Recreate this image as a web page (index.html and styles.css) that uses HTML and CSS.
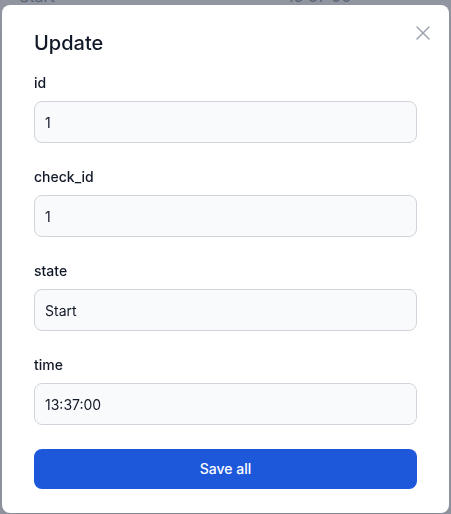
FILE: index.html
```html
<!DOCTYPE html>
<html lang="en">
<head>
<meta charset="utf-8">
<title>Update</title>
<link rel="stylesheet" href="styles.css">
</head>
<body>
<div class="page">
  <div class="row">
    <span class="cell cell-state">Start</span>
    <span class="cell cell-time">13:37:00</span>
  </div>
</div>
<div class="overlay">
  <div class="modal">
    <button class="close" type="button" aria-label="Close">
      <svg width="24" height="24" viewBox="0 0 24 24" fill="none" stroke="currentColor" stroke-width="1.5" stroke-linecap="round" stroke-linejoin="round"><path d="M6 18L18 6M6 6l12 12"/></svg>
    </button>
    <h3 class="title">Update</h3>
    <form class="form">
      <div class="field">
        <label class="label">id</label>
        <input class="input" type="text" value="1">
      </div>
      <div class="field">
        <label class="label">check_id</label>
        <input class="input" type="text" value="1">
      </div>
      <div class="field">
        <label class="label">state</label>
        <input class="input" type="text" value="Start">
      </div>
      <div class="field">
        <label class="label">time</label>
        <input class="input" type="text" value="13:37:00">
      </div>
      <button class="save" type="button">Save all</button>
    </form>
  </div>
</div>
</body>
</html>
```

FILE: styles.css
```css
* { box-sizing: border-box; }
html, body {
  margin: 0;
  padding: 0;
  background: #ffffff;
  font-family: Inter, "Noto Sans", sans-serif;
  color: #111827;
}
.page {
  margin-top: -16px;
}
.row {
  display: flex;
  font-size: 16px;
  line-height: 24px;
  color: #374151;
}
.cell-state { margin-left: 19px; }
.cell-time { margin-left: 232px; }

.overlay {
  position: fixed;
  inset: 0;
  background: rgba(107, 114, 128, 0.75);
  display: flex;
  justify-content: center;
  align-items: flex-start;
  padding-top: 5px;
}
.modal {
  position: relative;
  width: 447px;
  background: #ffffff;
  border-radius: 8px;
  padding: 24px 32px 24px 32px;
  box-shadow: 0 10px 15px -3px rgba(0,0,0,0.1);
}
.close {
  position: absolute;
  top: 16px;
  right: 14px;
  width: 24px;
  height: 24px;
  padding: 0;
  border: 0;
  background: transparent;
  color: #9ca3af;
  display: flex;
}
.title {
  margin: 0 0 16px 0;
  font-size: 20px;
  line-height: 28px;
  font-weight: 500;
  color: #111827;
}
.form {
  display: flex;
  flex-direction: column;
  gap: 24px;
  margin: 0;
}
.field {
  display: flex;
  flex-direction: column;
  gap: 8px;
}
.label {
  font-size: 14px;
  line-height: 20px;
  font-weight: 500;
  color: #111827;
}
.input {
  display: block;
  width: 100%;
  height: 42px;
  padding: 10px;
  font-family: inherit;
  font-size: 14px;
  line-height: 20px;
  color: #111827;
  background: #f9fafb;
  border: 1px solid #d1d5db;
  border-radius: 8px;
  outline: none;
}
.save {
  display: block;
  width: 100%;
  height: 40px;
  border: 0;
  border-radius: 8px;
  background: #1d58db;
  color: #ffffff;
  font-family: inherit;
  font-size: 14px;
  line-height: 20px;
  font-weight: 500;
}
```
